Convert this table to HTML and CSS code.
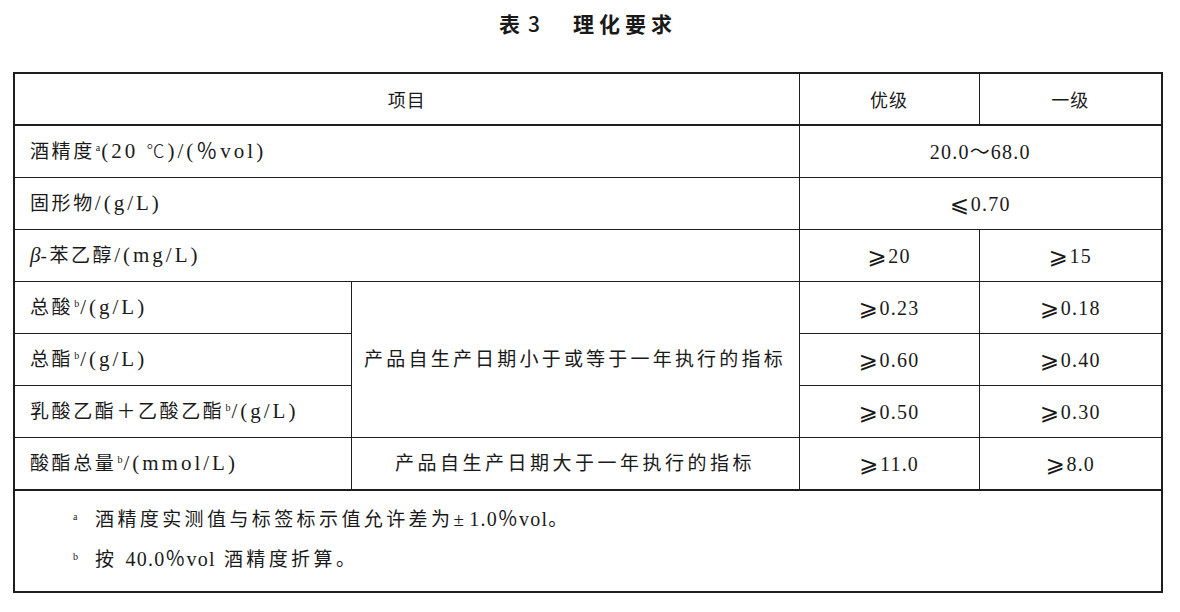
FILE: index.html
```html
<!DOCTYPE html>
<html lang="zh-CN">
<head>
<meta charset="utf-8">
<title>表3 理化要求</title>
<link rel="stylesheet" href="styles.css">
</head>
<body>
<div class="page">
  <h1 class="title"><span class="t-no">表</span><span class="t-num">3</span><span class="t-name">理化要求</span></h1>
  <table class="spec">
    <colgroup>
      <col class="c1"><col class="c2"><col class="c3"><col class="c4">
    </colgroup>
    <tbody>
      <tr class="head">
        <td colspan="2" class="ctr">项目</td>
        <td class="ctr">优级</td>
        <td class="ctr">一级</td>
      </tr>
      <tr>
        <td colspan="2" class="lbl">酒精度<sup>a</sup><span class="u">(20 <span class="deg">℃</span>)/(％vol)</span></td>
        <td colspan="2" class="val">20.0～68.0</td>
      </tr>
      <tr>
        <td colspan="2" class="lbl">固形物<span class="u">/(g/L)</span></td>
        <td colspan="2" class="val"><span class="op">⩽</span>0.70</td>
      </tr>
      <tr>
        <td colspan="2" class="lbl"><i class="beta">β</i>-苯乙醇<span class="u">/(mg/L)</span></td>
        <td class="val"><span class="op">⩾</span>20</td>
        <td class="val"><span class="op">⩾</span>15</td>
      </tr>
      <tr>
        <td class="lbl">总酸<sup>b</sup><span class="u">/(g/L)</span></td>
        <td rowspan="3" class="mid">产品自生产日期小于或等于一年执行的指标</td>
        <td class="val"><span class="op">⩾</span>0.23</td>
        <td class="val"><span class="op">⩾</span>0.18</td>
      </tr>
      <tr>
        <td class="lbl">总酯<sup>b</sup><span class="u">/(g/L)</span></td>
        <td class="val"><span class="op">⩾</span>0.60</td>
        <td class="val"><span class="op">⩾</span>0.40</td>
      </tr>
      <tr>
        <td class="lbl">乳酸乙酯＋乙酸乙酯<sup>b</sup><span class="u">/(g/L)</span></td>
        <td class="val"><span class="op">⩾</span>0.50</td>
        <td class="val"><span class="op">⩾</span>0.30</td>
      </tr>
      <tr class="last">
        <td class="lbl">酸酯总量<sup>b</sup><span class="u">/(mmol/L)</span></td>
        <td class="mid wide">产品自生产日期大于一年执行的指标</td>
        <td class="val"><span class="op">⩾</span>11.0</td>
        <td class="val"><span class="op">⩾</span>8.0</td>
      </tr>
      <tr class="notes">
        <td colspan="4">
          <p class="note"><span class="mark">a</span>酒精度实测值与标签标示值允许差为<span class="pm">±</span><span class="nu">1.0％vol</span>。</p>
          <p class="note"><span class="mark">b</span>按 <span class="nu">40.0％vol</span> 酒精度折算。</p>
        </td>
      </tr>
    </tbody>
  </table>
</div>
</body>
</html>
```

FILE: styles.css
```css
html, body {
  margin: 0;
  padding: 0;
  background: #ffffff;
}

body {
  font-family: "Liberation Serif", "Noto Sans CJK SC", serif;
  color: #1a1a1a;
}

.page {
  padding: 11px 0 0 13px;
  width: 1148px;
}

.title {
  margin: 0;
  height: 61px;
  display: flex;
  justify-content: center;
  align-items: flex-start;
  font-family: "Noto Sans CJK SC", sans-serif;
  font-weight: 700;
  font-size: 21px;
  line-height: 24px;
  color: #1a1a1a;
  padding-left: 2px;
}

.t-num {
  margin-left: 8px;
  font-weight: 500;
}

.t-name {
  margin-left: 33px;
  letter-spacing: 5px;
}

.spec {
  width: 1148px;
  table-layout: fixed;
  border-collapse: collapse;
  border: 2px solid #1e1e1e;
}

.c1 { width: 337px; }
.c2 { width: 448px; }
.c3 { width: 180px; }
.c4 { width: 183px; }

.spec td {
  border: 1px solid #1e1e1e;
  padding: 0;
  height: 51px;
  font-size: 19px;
  line-height: 24px;
  vertical-align: middle;
}

.spec tr.head td {
  border-bottom: 2px solid #1e1e1e;
  height: 50px;
}

.ctr {
  text-align: center;
  font-family: "Noto Sans CJK SC", sans-serif;
  font-size: 18px !important;
  letter-spacing: 1px;
}

.lbl {
  padding-left: 15px !important;
  letter-spacing: 2.6px;
  white-space: nowrap;
}

.u {
  font-family: "Liberation Serif", "Noto Sans CJK SC", serif;
  font-size: 21px;
  letter-spacing: 3px;
}

.deg {
  font-size: 18px;
  font-weight: 300;
}

.lbl sup, .mark {
  font-size: 10px;
  letter-spacing: 0;
}

.lbl sup {
  vertical-align: 7px;
  line-height: 0;
  margin-left: 1px;
  margin-right: 1px;
}

.beta {
  font-family: "Liberation Serif", serif;
  font-size: 21px;
  font-style: italic;
  letter-spacing: 0;
}

.val {
  text-align: center;
  font-size: 20px !important;
  letter-spacing: 1.2px;
}

.op {
  display: inline-block;
  width: 21px;
  font-family: "DejaVu Serif", "DejaVu Sans", serif;
  font-size: 23px;
  line-height: 20px;
  letter-spacing: 0;
  text-align: left;
  vertical-align: -1px;
}

.mid {
  text-align: center;
  letter-spacing: 3.2px;
  white-space: nowrap;
}

.mid.wide {
  letter-spacing: 3.5px;
}

.spec tr.last td {
  border-bottom: 2px solid #1e1e1e;
}

.spec tr.notes td {
  height: 100px;
  padding: 0 0 0 58px;
  vertical-align: middle;
}

.note {
  margin: 0;
  font-size: 19px;
  line-height: 37px;
  letter-spacing: 3.4px;
  display: flex;
  align-items: baseline;
  white-space: pre;
}

.nu {
  font-size: 20px;
  letter-spacing: 1.2px;
}

.pm {
  margin: 0 2px 0 0;
}

.mark {
  width: 22px;
  position: relative;
  top: -6px;
}
```
